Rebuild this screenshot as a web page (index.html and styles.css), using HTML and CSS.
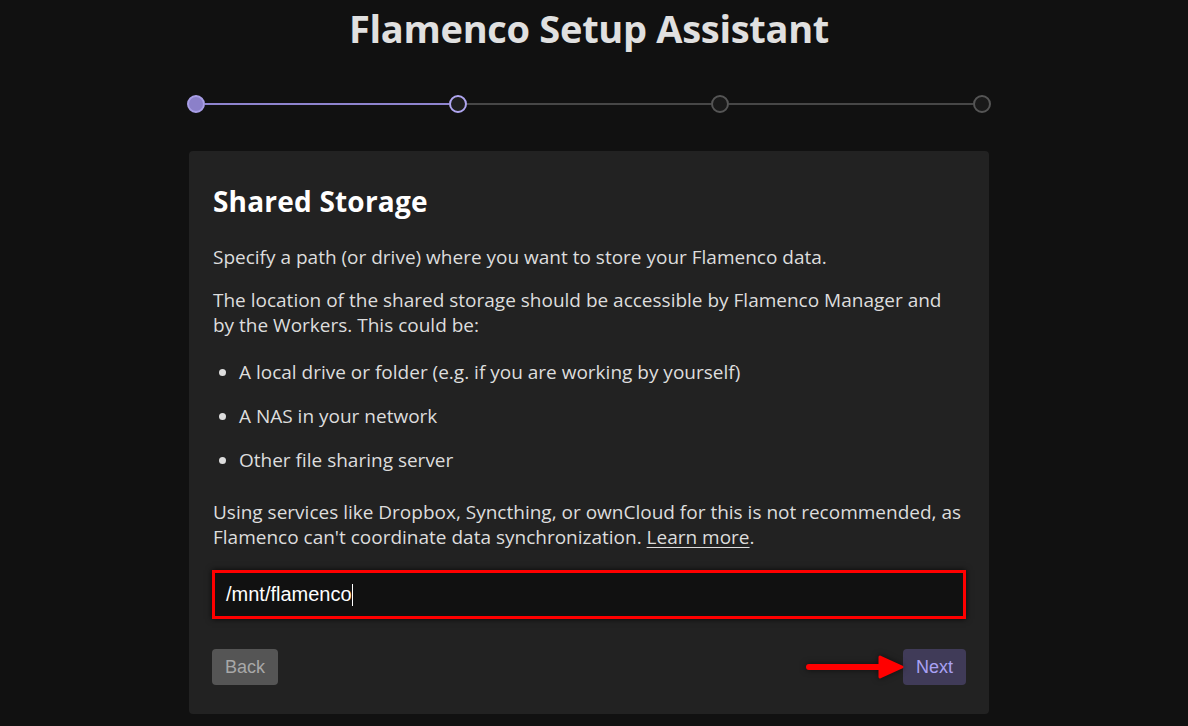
FILE: index.html
```html
<!DOCTYPE html>
<html>
<head>
<meta charset="utf-8">
<link rel="stylesheet" href="styles.css">
</head>
<body>
<div class="page">
  <h1 class="title">Flamenco Setup Assistant</h1>
  <div class="stepper">
    <span class="dot dot-done"></span>
    <span class="line line-done"></span>
    <span class="dot dot-current"></span>
    <span class="line"></span>
    <span class="dot"></span>
    <span class="line"></span>
    <span class="dot"></span>
  </div>
  <section class="card">
    <h2 class="card-title">Shared Storage</h2>
    <p class="para">Specify a path (or drive) where you want to store your Flamenco data.</p>
    <p class="para">The location of the shared storage should be accessible by Flamenco Manager and by the Workers. This could be:</p>
    <ul class="list">
      <li>A local drive or folder (e.g. if you are working by yourself)</li>
      <li>A NAS in your network</li>
      <li>Other file sharing server</li>
    </ul>
    <p class="para">Using services like Dropbox, Syncthing, or ownCloud for this is not recommended, as Flamenco can't coordinate data synchronization. <a class="link" href="#">Learn more</a>.</p>
    <div class="input"><span class="input-text">/mnt/flamenco</span><span class="caret"></span></div>
    <div class="actions">
      <button class="btn btn-back">Back</button>
      <div class="next-wrap">
        <svg class="arrow" width="100" height="30" viewBox="0 0 100 30">
          <line x1="4" y1="15" x2="80" y2="15" stroke="#ff0000" stroke-width="6" stroke-linecap="round"/>
          <polygon points="75,5 97,15 75,25" fill="#ff0000" stroke="#ff0000" stroke-width="3" stroke-linejoin="round"/>
        </svg>
        <button class="btn btn-next">Next</button>
      </div>
    </div>
  </section>
</div>
</body>
</html>
```

FILE: styles.css
```css
* { box-sizing: border-box; }
html, body { margin: 0; padding: 0; background: #111111; }
body {
  font-family: "Open Sans", "Noto Sans", sans-serif;
  color: #dddddd;
  height: 726px;
  overflow: hidden;
}
.page {
  width: 1178px;
  display: flex;
  flex-direction: column;
  align-items: center;
}
.title {
  margin: 4px 0 0;
  font-size: 38px;
  line-height: 48px;
  font-weight: 700;
  color: #e0e0e0;
  letter-spacing: -0.3px;
}
.stepper {
  margin-top: 43px;
  width: 804px;
  display: flex;
  align-items: center;
}
.dot {
  width: 18px;
  height: 18px;
  border-radius: 50%;
  border: 2px solid #555555;
  background: #1a1a1a;
  flex: none;
}
.dot-done { background: #8b80c9; border-color: #a89ee6; }
.dot-current { background: #1e1e1e; border-color: #b0a6f0; }
.line {
  flex: 1;
  height: 2px;
  background: #474747;
}
.line-done { background: #8e84cf; }
.card {
  margin-top: 38px;
  width: 800px;
  height: 563px;
  background: #222222;
  border-radius: 4px;
  padding: 32px 23px 0 24px;
}
.card-title {
  margin: 0;
  font-size: 28px;
  line-height: 36px;
  font-weight: 700;
  color: #ffffff;
  letter-spacing: 0.2px;
}
.para {
  margin: 18px 0 0;
  font-size: 19px;
  line-height: 25px;
  color: #dddddd;
}
.card-title + .para { margin-top: 26px; }
.list {
  margin: 22px 0 0;
  padding-left: 26px;
  font-size: 19px;
  line-height: 25px;
}
.list li { margin-bottom: 19px; }
.list li:last-child { margin-bottom: 0; }
.list + .para { margin-top: 27px; }
.link { color: #dddddd; text-decoration: underline; text-underline-offset: 3px; }
.input {
  margin-top: 20px;
  height: 49px;
  border: 3px solid #ff0000;
  background: #111111;
  box-shadow: 0 0 6px rgba(0,0,0,0.8);
  display: flex;
  align-items: center;
  padding-left: 11px;
  margin-left: -1px;
}
.input-text {
  font-family: "Liberation Sans", Arial, sans-serif;
  font-size: 20px;
  color: #ffffff;
}
.caret {
  width: 1px;
  height: 22px;
  background: #ffffff;
}
.actions {
  margin-top: 30px;
  display: flex;
  justify-content: space-between;
  align-items: center;
  margin-left: -1px;
}
.next-wrap { display: flex; align-items: center; }
.arrow { margin-right: -2px; filter: drop-shadow(0 0 3px rgba(0,0,0,0.6)); }
.btn {
  height: 36px;
  border: none;
  border-radius: 4px;
  font-family: "Liberation Sans", Arial, sans-serif;
  font-size: 18px;
  padding: 0 13px;
}
.btn-back { background: #555555; color: #a8a8a8; width: 66px; }
.btn-next { background: #403b58; color: #a9a1f4; width: 63px; }
```
